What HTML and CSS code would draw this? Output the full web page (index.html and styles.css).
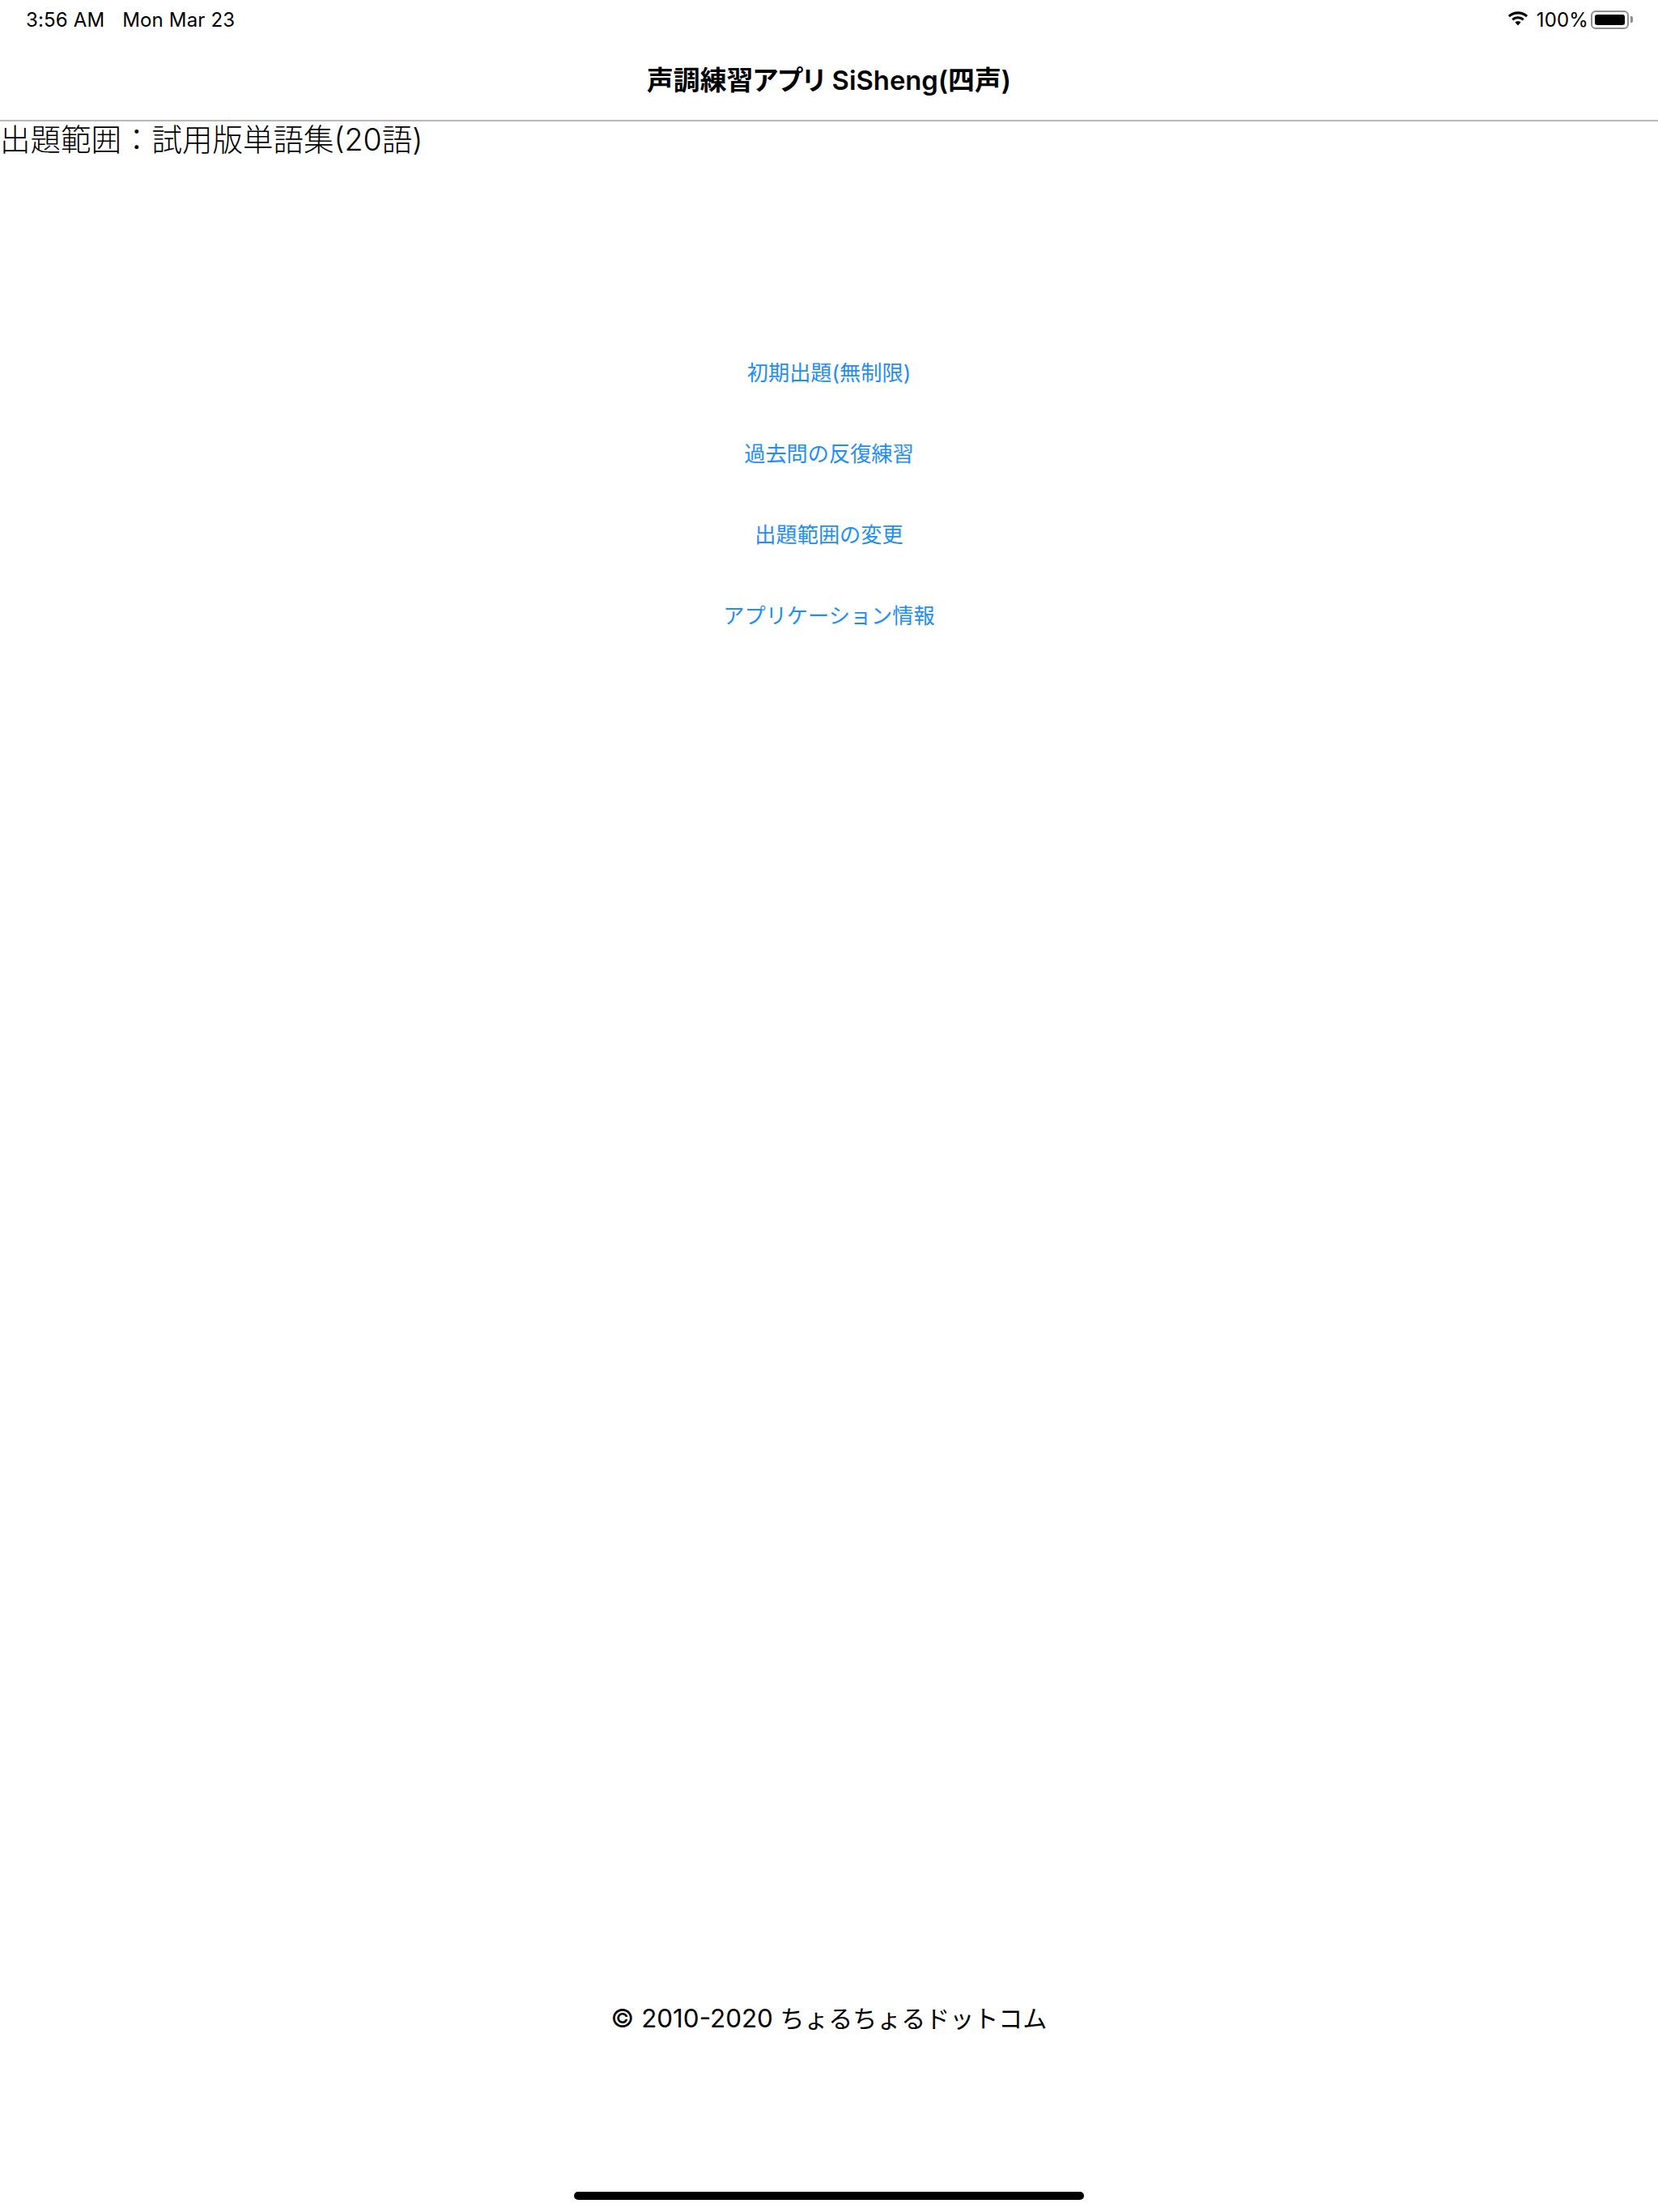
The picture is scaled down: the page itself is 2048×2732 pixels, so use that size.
FILE: index.html
```html
<!DOCTYPE html>
<html lang="ja">
<head>
    <meta charset="UTF-8">
    <meta name="viewport" content="width=device-width, initial-scale=1.0">
    <title>声調練習アプリ SiSheng(四声)</title>
    <link rel="stylesheet" href="styles.css">
</head>
<body>
    <div class="page">
        <div class="status-bar">
            <div class="status-left">
                <span>3:56 AM</span>
                <span>Mon Mar 23</span>
            </div>
            <div class="status-right">
                <svg class="wifi-icon" width="28" height="20" viewBox="0 0 28 20">
                    <path d="M14 3.400c3.900 0 7.400 1.500 10.100 3.900l2-2.200C22.900 2.100 18.700.3 14 .3S5.100 2.100 1.900 5.100l2 2.200C6.600 4.900 10.100 3.400 14 3.400z"/>
                    <path d="M14 9.300c2.200 0 4.100.8 5.600 2.100l2.100-2.200C19.700 7.300 17 6.200 14 6.200s-5.700 1.100-7.700 3l2.100 2.200c1.500-1.300 3.400-2.100 5.600-2.100z"/>
                    <path d="M14 12.200c-1.500 0-2.700.5-3.600 1.400L14 17.400l3.600-3.800c-.9-.9-2.100-1.400-3.600-1.400z"/>
                </svg>
                <span>100%</span>
                <div class="battery">
                    <div class="battery-fill"></div>
                </div>
                <div class="battery-nub"></div>
            </div>
        </div>

        <div class="nav-bar">
            <h1>声調練習アプリ SiSheng(四声)</h1>
        </div>

        <p class="range-label">出題範囲：試用版単語集(20語)</p>

        <div class="menu">
            <a href="#">初期出題(無制限)</a>
            <a href="#">過去問の反復練習</a>
            <a href="#">出題範囲の変更</a>
            <a href="#">アプリケーション情報</a>
        </div>

        <div class="footer"><span class="copyright">© 2010-2020</span> ちょるちょるドットコム</div>
        <div class="home-indicator"></div>
    </div>
</body>
</html>
```

FILE: styles.css
```css
* {
    margin: 0;
    padding: 0;
    box-sizing: border-box;
}

body {
    font-family: Inter, 'Noto Sans CJK JP', sans-serif;
    background-color: #fff;
    color: #000;
}

.page {
    height: 2732px;
    display: flex;
    flex-direction: column;
}

.status-bar {
    height: 48px;
    padding: 0 31px 0 32px;
    display: flex;
    align-items: center;
    justify-content: space-between;
    font-size: 24px;
    letter-spacing: 0.15px;
}

.status-left {
    display: flex;
    gap: 22px;
}

.status-right {
    display: flex;
    align-items: center;
}

.wifi-icon {
    margin-right: 9px;
}

.battery {
    width: 47px;
    height: 23px;
    margin-left: 3px;
    padding: 3px;
    border: 2px solid #8e8e8e;
    border-radius: 6px;
}

.battery-fill {
    height: 100%;
    background-color: #000;
    border-radius: 3px;
}

.battery-nub {
    width: 3px;
    height: 8px;
    margin-left: 2px;
    background-color: #8e8e8e;
    border-radius: 0 2px 2px 0;
}

.nav-bar {
    height: 102px;
    padding-bottom: 4px;
    display: flex;
    align-items: center;
    justify-content: center;
    border-bottom: 2px solid #b8b8b8;
}

.nav-bar h1 {
    font-size: 32.8px;
    font-weight: 600;
    font-feature-settings: "palt";
}

.range-label {
    font-size: 37.5px;
    font-weight: 300;
    line-height: 45px;
}

.menu {
    margin-top: 214px;
    display: flex;
    flex-direction: column;
}

.menu a {
    height: 100px;
    display: flex;
    align-items: center;
    justify-content: center;
    font-size: 26.2px;
    color: #1f8efa;
    text-decoration: none;
}

.footer {
    margin-top: auto;
    height: 60px;
    line-height: 58px;
    text-align: center;
    font-size: 30px;
}

.copyright {
    font-size: 31.4px;
}

.home-indicator {
    width: 630px;
    height: 10px;
    margin: 183px auto 15px;
    background-color: #000;
    border-radius: 5px;
}
```
